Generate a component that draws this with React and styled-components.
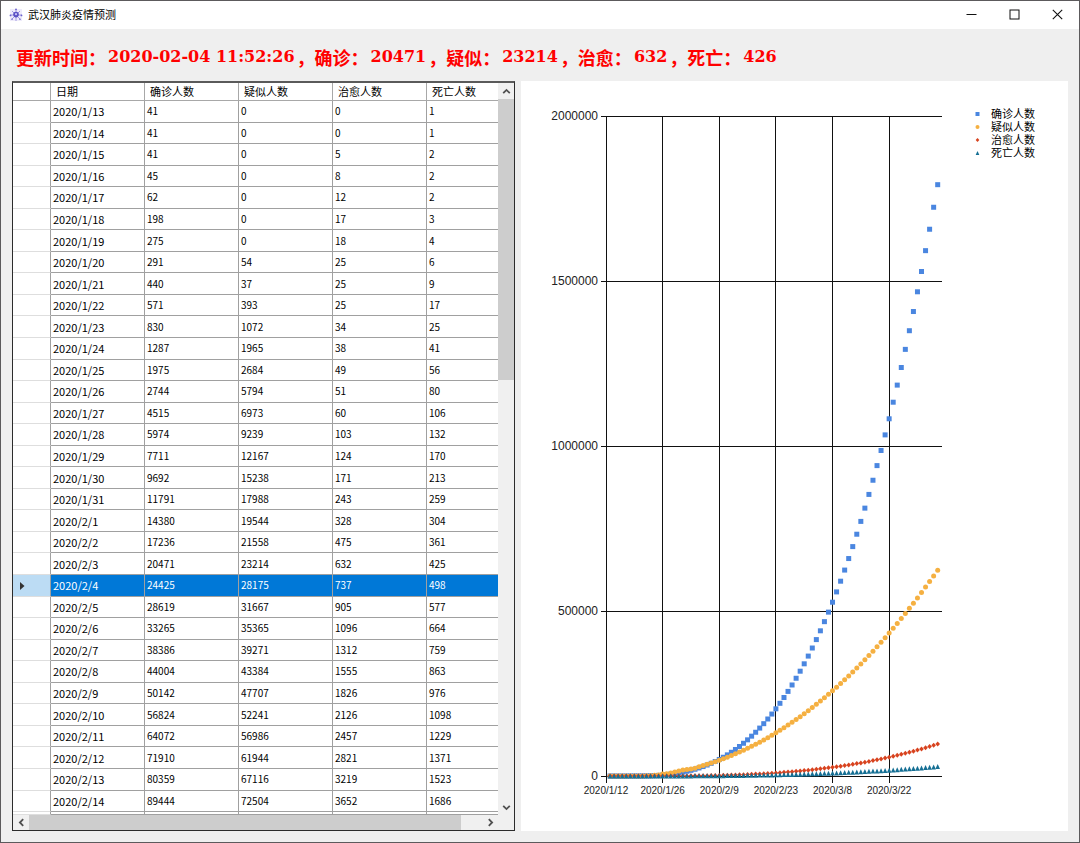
import { useState } from 'react';
import styled, { createGlobalStyle } from 'styled-components';

const GlobalStyle = createGlobalStyle`
  * {
    box-sizing: border-box;
  }

  body {
    margin: 0;
    background: #efefef;
    font-family: 'Liberation Sans', 'Noto Sans CJK SC', sans-serif;
  }
`;

const Window = styled.div`
  display: flex;
  flex-direction: column;
  min-height: 100vh;
  background: #efefef;
  border: 1px solid #5c5a5c;
`;

const TitleBar = styled.header`
  display: flex;
  align-items: center;
  height: 28px;
  padding-left: 8px;
  background: #ffffff;
`;

const AppTitle = styled.h1`
  flex: 1;
  margin: 0 0 2px 5px;
  font: 400 11px/16px 'Noto Sans CJK SC', sans-serif;
  color: #000000;
`;

const WindowButton = styled.button`
  display: flex;
  align-items: center;
  justify-content: center;
  width: 43px;
  height: 28px;
  padding: 0 0 2px;
  border: none;
  background: none;

  &:hover {
    background: #e5e5e5;
  }
`;

const StatusLine = styled.p`
  display: flex;
  align-items: center;
  gap: 2px;
  height: 52px;
  margin: 0;
  padding: 4px 0 0 15px;
  color: #ff0000;
  white-space: pre;
`;

const StatusLabel = styled.span`
  font: 700 18px/24px 'Noto Sans CJK SC', sans-serif;
`;

const StatusValue = styled.span`
  font: 700 16px/24px 'DejaVu Serif', serif;
`;

const Panels = styled.main`
  flex: 1;
  display: grid;
  grid-template-columns: 503fr 547fr;
  gap: 6px;
  padding: 0 11px 11px;
`;

const GridPanel = styled.section`
  display: grid;
  grid-template-columns: minmax(0, 1fr) 16px;
  grid-template-rows: minmax(0, 1fr) 15px;
  background: #ffffff;
  border: 1px solid #2c2c2c;
  border-top: 2px solid #5a5a5a;
`;

const DataTable = styled.table`
  display: flex;
  flex-direction: column;
  font-family: 'Noto Sans CJK SC', sans-serif;
  color: #000000;
`;

const TableHead = styled.thead`
  display: block;
`;

const TableBody = styled.tbody`
  flex: 1;
  display: flex;
  flex-direction: column;
`;

const Row = styled.tr`
  flex: ${props => (props.$stub ? '0 0 3px' : '1 0 20px')};
  display: grid;
  grid-template-columns: 38px 94fr 94fr 94fr 94fr 71fr;
  overflow: hidden;
  background: ${props => (props.$selected ? '#0078d7' : '#ffffff')};
  color: ${props => (props.$selected ? '#ffffff' : '#000000')};
`;

const HeadCell = styled.th`
  height: 18px;
  padding: 0 0 0 5px;
  border-right: 1px solid #a8a8a8;
  border-bottom: 1px solid #a8a8a8;
  font-size: 11px;
  line-height: 17px;
  font-weight: 400;
  text-align: left;

  &:last-child {
    border-right: none;
  }
`;

const RowMarker = styled.th`
  display: flex;
  align-items: center;
  padding: 2px 0 0 7px;
  border-right: 1px solid #a0a0a0;
  border-bottom: 1px solid #dedede;
  background: ${props => (props.$selected ? '#bcdcf4' : '#ffffff')};
`;

const Cell = styled.td`
  display: flex;
  align-items: center;
  padding: 0 0 0 2px;
  border-right: 1px solid #a0a0a0;
  border-bottom: 1px solid #a0a0a0;
  font-size: ${props => (props.$date ? '11px' : '10px')};
  line-height: 16px;

  &:last-child {
    border-right: none;
  }
`;

const ScrollBar = styled.div`
  display: flex;
  flex-direction: ${props => (props.$vertical ? 'column' : 'row')};
  background: #f0f0f0;
`;

const ScrollButton = styled.button`
  display: flex;
  align-items: center;
  justify-content: center;
  flex: 0 0 16px;
  padding: 0;
  border: none;
  background: none;
`;

const ScrollThumb = styled.div`
  flex: ${props => props.$size} 0 0;
  background: #cdcdcd;
`;

const ScrollTrack = styled.div`
  flex: ${props => props.$size} 0 0;
`;

const Corner = styled.div`
  background: #f0f0f0;
`;

const ChartPanel = styled.section`
  display: flex;
  background: #ffffff;
`;

const ChartSvg = styled.svg`
  display: block;
  width: 100%;
  height: 100%;
`;

const TickText = styled.text`
  font-family: 'Liberation Sans', sans-serif;
  font-size: ${props => (props.$small ? '10px' : '12px')};
  fill: #222222;
`;

const LegendText = styled.text`
  font-family: 'Liberation Sans', 'Noto Sans CJK SC', sans-serif;
  font-size: 11px;
  fill: #000000;
`;

const columns = ['日期', '确诊人数', '疑似人数', '治愈人数', '死亡人数'];

const records = [
  ['2020/1/13', 41, 0, 0, 1],
  ['2020/1/14', 41, 0, 0, 1],
  ['2020/1/15', 41, 0, 5, 2],
  ['2020/1/16', 45, 0, 8, 2],
  ['2020/1/17', 62, 0, 12, 2],
  ['2020/1/18', 198, 0, 17, 3],
  ['2020/1/19', 275, 0, 18, 4],
  ['2020/1/20', 291, 54, 25, 6],
  ['2020/1/21', 440, 37, 25, 9],
  ['2020/1/22', 571, 393, 25, 17],
  ['2020/1/23', 830, 1072, 34, 25],
  ['2020/1/24', 1287, 1965, 38, 41],
  ['2020/1/25', 1975, 2684, 49, 56],
  ['2020/1/26', 2744, 5794, 51, 80],
  ['2020/1/27', 4515, 6973, 60, 106],
  ['2020/1/28', 5974, 9239, 103, 132],
  ['2020/1/29', 7711, 12167, 124, 170],
  ['2020/1/30', 9692, 15238, 171, 213],
  ['2020/1/31', 11791, 17988, 243, 259],
  ['2020/2/1', 14380, 19544, 328, 304],
  ['2020/2/2', 17236, 21558, 475, 361],
  ['2020/2/3', 20471, 23214, 632, 425],
  ['2020/2/4', 24425, 28175, 737, 498],
  ['2020/2/5', 28619, 31667, 905, 577],
  ['2020/2/6', 33265, 35365, 1096, 664],
  ['2020/2/7', 38386, 39271, 1312, 759],
  ['2020/2/8', 44004, 43384, 1555, 863],
  ['2020/2/9', 50142, 47707, 1826, 976],
  ['2020/2/10', 56824, 52241, 2126, 1098],
  ['2020/2/11', 64072, 56986, 2457, 1229],
  ['2020/2/12', 71910, 61944, 2821, 1371],
  ['2020/2/13', 80359, 67116, 3219, 1523],
  ['2020/2/14', 89444, 72504, 3652, 1686],
];

// cubic forecast from 2020/2/4 on: value and its first, second and third differences
const FORECAST_START = 22;
const DAYS = 82;
const series = [
  { name: '确诊人数', color: '#4a86e0', shape: 'square', forecast: [24425, 4194, 452, 23] },
  { name: '疑似人数', color: '#f5b041', shape: 'circle', forecast: [28175, 3492, 206, 1.15] },
  { name: '治愈人数', color: '#d8431f', shape: 'diamond', forecast: [737, 168, 23, 1.45] },
  { name: '死亡人数', color: '#156f94', shape: 'triangle', forecast: [498, 79, 8, 0.3] },
];

const seriesValue = (item, column, day) => {
  if (day < FORECAST_START) return records[day][column];
  const n = day - FORECAST_START;
  const [a, b, c, d] = item.forecast;
  return a + n * b + (n * (n - 1) * c) / 2 + (n * (n - 1) * (n - 2) * d) / 6;
};

const LEFT = 85;
const BOTTOM = 695;
const PLOT_HEIGHT = 659.6;
const DAY_STEP = 4.045;

const yTicks = [0, 500000, 1000000, 1500000, 2000000];
const xTicks = ['2020/1/12', '2020/1/26', '2020/2/9', '2020/2/23', '2020/3/8', '2020/3/22'];

const xOf = day => LEFT + day * DAY_STEP;
const yOf = value => BOTTOM - (value / 2000000) * PLOT_HEIGHT;
const crisp = n => Math.floor(n) + 0.5;

const Marker = ({ shape, color, x, y }) => {
  if (shape === 'square') return <rect x={x - 2.5} y={y - 2.5} width="5" height="5" fill={color} />;
  if (shape === 'circle') return <circle cx={x} cy={y} r="2.5" fill={color} />;
  if (shape === 'diamond') {
    return <path d={`M${x} ${y - 2.5}l2.3 2.5l-2.3 2.5l-2.3 -2.5z`} fill={color} />;
  }
  return <path d={`M${x} ${y - 2.5}l2.3 5h-4.6z`} fill={color} />;
};

const Chart = () => (
  <ChartSvg viewBox="0 0 547 750" role="img" aria-label="武汉肺炎疫情预测">
    <g stroke="#111111" strokeWidth="1">
      {yTicks.map(value => (
        <line key={value} x1="80" x2="421" y1={crisp(yOf(value))} y2={crisp(yOf(value))} />
      ))}
      {xTicks.map((label, i) => (
        <line key={label} x1={crisp(xOf(i * 14))} x2={crisp(xOf(i * 14))} y1="35" y2="702" />
      ))}
    </g>
    {yTicks.map(value => (
      <TickText key={value} x="77" y={yOf(value) + 3.5} textAnchor="end">{value}</TickText>
    ))}
    {xTicks.map((label, i) => (
      <TickText key={label} $small x={xOf(i * 14)} y="713" textAnchor="middle">{label}</TickText>
    ))}
    {series.map((item, s) => (
      <g key={item.name}>
        {Array.from({ length: DAYS }, (_, day) => (
          <Marker
            key={day}
            shape={item.shape}
            color={item.color}
            x={xOf(day + 1)}
            y={yOf(seriesValue(item, s + 1, day))}
          />
        ))}
      </g>
    ))}
    {series.map((item, i) => (
      <g key={item.name}>
        <g transform={`translate(456.5 ${33 + i * 13}) scale(0.8)`}>
          <Marker shape={item.shape} color={item.color} x={0} y={0} />
        </g>
        <LegendText x="470" y={37 + i * 13}>{item.name}</LegendText>
      </g>
    ))}
  </ChartSvg>
);

const Chevron = ({ rotate = 0 }) => (
  <svg width="9" height="9" viewBox="0 0 9 9" aria-hidden="true">
    <path
      d="M1.2 6.2L4.5 2.9L7.8 6.2"
      fill="none"
      stroke="#505050"
      strokeWidth="1.8"
      transform={`rotate(${rotate} 4.5 4.5)`}
    />
  </svg>
);

const VirusIcon = () => (
  <svg width="14" height="14" viewBox="0 0 14 14" aria-hidden="true">
    <rect x="1" y="1" width="12" height="12" fill="#eeebfa" />
    <g stroke="#9a92e0" strokeWidth="0.9">
      <path d="M7 1v12M1.5 7h11M3 3l8 8M11 3l-8 8" />
    </g>
    <circle cx="7" cy="6.6" r="2.8" fill="#5a50c4" />
    <circle cx="7" cy="6.2" r="1.1" fill="#c9c5f4" />
    <g fill="#6a60cc">
      <circle cx="7" cy="1.3" r="0.9" />
      <circle cx="1.5" cy="7.4" r="0.9" />
      <circle cx="12.5" cy="7.4" r="0.9" />
      <circle cx="3" cy="11.2" r="0.8" />
      <circle cx="11" cy="11.2" r="0.8" />
    </g>
  </svg>
);

const status = [
  ['更新时间：', '2020-02-04 11:52:26'],
  ['，确诊：', '20471'],
  ['，疑似：', '23214'],
  ['，治愈：', '632'],
  ['，死亡：', '426'],
];

const App = () => {
  const [selected, setSelected] = useState('2020/2/4');

  return (
    <>
      <GlobalStyle />
      <Window lang="zh-CN">
        <TitleBar>
          <VirusIcon />
          <AppTitle>武汉肺炎疫情预测</AppTitle>
          <WindowButton aria-label="最小化">
            <svg width="11" height="11" viewBox="0 0 11 11">
              <path d="M0.5 5.5h10" stroke="#111111" />
            </svg>
          </WindowButton>
          <WindowButton aria-label="最大化">
            <svg width="11" height="11" viewBox="0 0 11 11">
              <rect x="1" y="1" width="9" height="9" fill="none" stroke="#111111" />
            </svg>
          </WindowButton>
          <WindowButton aria-label="关闭">
            <svg width="11" height="11" viewBox="0 0 11 11">
              <path d="M0.8 0.8l9.4 9.4M10.2 0.8l-9.4 9.4" stroke="#111111" strokeWidth="1.1" />
            </svg>
          </WindowButton>
        </TitleBar>

        <StatusLine>
          {status.map(([label, value]) => [
            <StatusLabel key={label}>{label}</StatusLabel>,
            <StatusValue key={label + value}>{value}</StatusValue>,
          ])}
        </StatusLine>

        <Panels>
          <GridPanel>
            <DataTable>
              <TableHead>
                <Row>
                  <HeadCell />
                  {columns.map(name => (
                    <HeadCell key={name} scope="col">{name}</HeadCell>
                  ))}
                </Row>
              </TableHead>
              <TableBody>
                {records.map(record => {
                  const active = record[0] === selected;
                  return (
                    <Row key={record[0]} $selected={active} onClick={() => setSelected(record[0])}>
                      <RowMarker $selected={active} scope="row">
                        {active && (
                          <svg width="5" height="8" viewBox="0 0 5 8">
                            <path d="M0 0l4.5 4L0 8z" fill="#333333" />
                          </svg>
                        )}
                      </RowMarker>
                      {record.map((value, i) => (
                        <Cell key={columns[i]} $date={i === 0}>{value}</Cell>
                      ))}
                    </Row>
                  );
                })}
                <Row $stub aria-hidden="true">
                  <RowMarker />
                  {columns.map(name => <Cell key={name} />)}
                </Row>
              </TableBody>
            </DataTable>

            <ScrollBar $vertical>
              <ScrollButton aria-label="向上滚动"><Chevron /></ScrollButton>
              <ScrollThumb $size={281} />
              <ScrollTrack $size={419} />
              <ScrollButton aria-label="向下滚动"><Chevron rotate={180} /></ScrollButton>
            </ScrollBar>
            <ScrollBar>
              <ScrollButton aria-label="向左滚动"><Chevron rotate={-90} /></ScrollButton>
              <ScrollThumb $size={432} />
              <ScrollTrack $size={21} />
              <ScrollButton aria-label="向右滚动"><Chevron rotate={90} /></ScrollButton>
            </ScrollBar>
            <Corner />
          </GridPanel>

          <ChartPanel>
            <Chart />
          </ChartPanel>
        </Panels>
      </Window>
    </>
  );
};

export default App;
